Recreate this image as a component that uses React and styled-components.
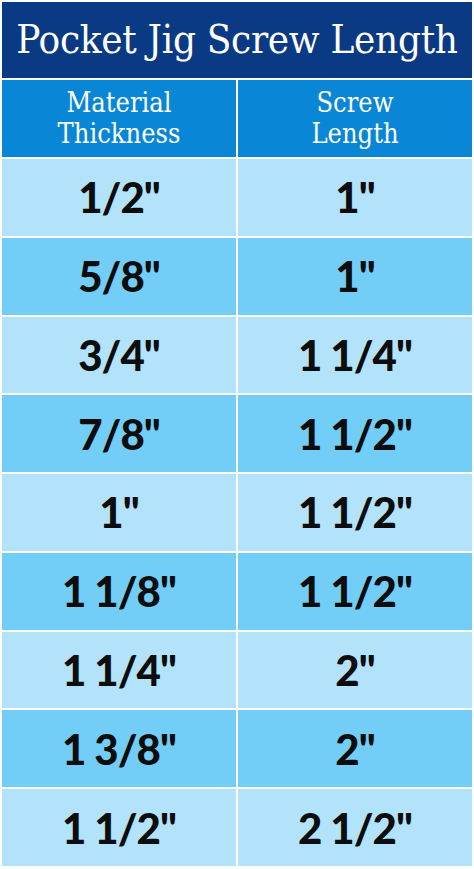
import React from 'react';
import styled, { createGlobalStyle } from 'styled-components';

const GlobalStyle = createGlobalStyle`
  html, body {
    margin: 0;
    padding: 0;
    background: #ffffff;
  }
`;

const Chart = styled.div`
  width: 474px;
  height: 869px;
  box-sizing: border-box;
  padding: 2px 2px 3px 2px;
  background: #ffffff;
  display: grid;
  grid-template-columns: 1fr 1fr;
  grid-template-rows: 76px 77px repeat(9, 1fr);
  gap: 2px;
`;

const Title = styled.h1`
  grid-column: 1 / span 2;
  margin: 0;
  background: #0b3a84;
  color: #ffffff;
  font-family: "DejaVu Serif", serif;
  font-stretch: condensed;
  font-weight: 400;
  font-size: 40px;
  letter-spacing: -0.3px;
  display: flex;
  align-items: center;
  justify-content: center;
  padding-bottom: 3px;
  white-space: nowrap;
`;

const HeadCell = styled.div`
  background: #0a86d6;
  color: #ffffff;
  font-family: "DejaVu Serif", serif;
  font-stretch: condensed;
  font-size: 27px;
  line-height: 31px;
  display: flex;
  align-items: center;
  justify-content: center;
  text-align: center;
  padding-bottom: 1px;
`;

const Cell = styled.div`
  background: ${p => (p.$alt ? '#72cdf7' : '#b3e3fa')};
  color: #0d0d0d;
  font-family: Lato, "Liberation Sans", sans-serif;
  font-weight: 900;
  font-size: 42px;
  letter-spacing: -1px;
  display: flex;
  align-items: center;
  justify-content: center;
`;

const rows = [
  ['1/2"', '1"'],
  ['5/8"', '1"'],
  ['3/4"', '1 1/4"'],
  ['7/8"', '1 1/2"'],
  ['1"', '1 1/2"'],
  ['1 1/8"', '1 1/2"'],
  ['1 1/4"', '2"'],
  ['1 3/8"', '2"'],
  ['1 1/2"', '2 1/2"'],
];

export default function App() {
  return (
    <>
      <GlobalStyle />
      <Chart>
        <Title>Pocket Jig Screw Length</Title>
        <HeadCell>Material<br />Thickness</HeadCell>
        <HeadCell>Screw<br />Length</HeadCell>
        {rows.map(([thick, screw], i) => (
          <React.Fragment key={i}>
            <Cell $alt={i % 2 === 1}>{thick}</Cell>
            <Cell $alt={i % 2 === 1}>{screw}</Cell>
          </React.Fragment>
        ))}
      </Chart>
    </>
  );
}
